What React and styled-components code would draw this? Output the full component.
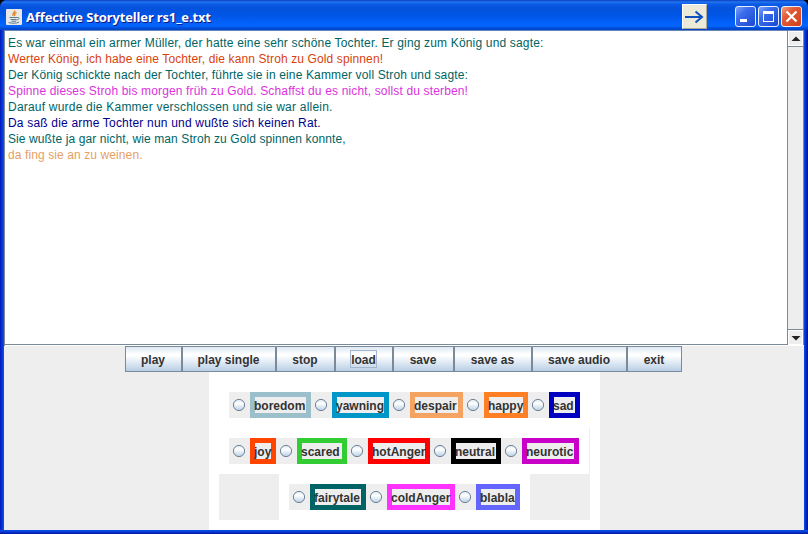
import React from 'react';
import styled, { createGlobalStyle } from 'styled-components';

const Global = createGlobalStyle`
  * { box-sizing: border-box; }
  body { margin: 0; background: #000; overflow: hidden; }
`;

const Window = styled.div`
  width: 808px;
  height: 534px;
  display: flex;
  flex-direction: column;
  font-family: "Liberation Sans", Arial, sans-serif;
  background:
    linear-gradient(#0a50e4 0, #0838d8 2px, #001290 4px) 0 100% / 100% 4px no-repeat,
    linear-gradient(90deg, #0019b8 0, #0831d9 2px, #0a55e8 4px, #0a55e8 804px, #0733d8 805px, #001290 808px);
  border-radius: 7px 7px 0 0;
  overflow: hidden;
`;

const TitleBar = styled.header`
  height: 30px;
  flex: none;
  display: flex;
  align-items: center;
  padding: 3px 6px 0 6px;
  background: linear-gradient(#0a3ec0 0, #2474ee 2px, #0a5ce8 4px, #0552dc 8px, #0055e4 15px, #0260f8 22px, #0364fc 26px, #0150dc 28px, #0040c4 30px);
`;

const Title = styled.h1`
  margin: 0 auto 0 4px;
  font: bold 13px/18px "Noto Sans", sans-serif;
  letter-spacing: ${p => p.$spacing}px;
  color: #fff;
  text-shadow: 1px 1px 0 #0a1883;
  white-space: nowrap;
`;

const ArrowButton = styled.button`
  width: 25px;
  height: 25px;
  margin-right: 26px;
  padding: 0;
  display: flex;
  border: 1px solid;
  border-color: #fff #aca899 #aca899 #fff;
  background: #ece9d8;
`;

const Caption = styled.button`
  width: 21px;
  height: 21px;
  margin-left: 2px;
  padding: 0;
  display: flex;
  border: 1px solid #e8eefc;
  border-radius: 3px;
  background: ${p => p.$close
    ? 'linear-gradient(135deg, #f0a080 0, #e25a38 35%, #d04018 100%)'
    : 'linear-gradient(135deg, #7ca4f8 0, #3a6cec 35%, #1b48d0 100%)'};
`;

const Client = styled.main`
  margin: 0 4px 4px;
  height: 500px;
  display: flex;
  flex-direction: column;
  background: #eee;
`;

const ScrollPane = styled.section`
  height: 316px;
  flex: none;
  display: flex;
  background: #fff;
  border-top: 1px solid #6a86b8;
  border-left: 1px solid #7a8a99;
  box-shadow: inset 0 -1px #fff, inset 0 -2px #7a8a99;
`;

const Story = styled.div`
  flex: 1;
  padding: 4px 0 0 3px;
`;

const Line = styled.p`
  margin: 0;
  height: 16px;
  font-size: 12px;
  line-height: 16px;
  letter-spacing: ${p => p.$spacing}px;
  color: ${p => p.$color};
  white-space: nowrap;
`;

const ScrollBar = styled.div`
  width: 17px;
  height: 314px;
  display: flex;
  flex-direction: column;
  justify-content: space-between;
  background: #eee;
  border-left: 1px solid #7a8a99;
  border-right: 1px solid #7a8a99;
`;

const ScrollArrow = styled.div`
  height: 15px;
  display: flex;
  background: #eee;
  border: 1px solid #fff;
  box-shadow: 0 ${p => (p.$down ? -1 : 1)}px #7a8a99;
`;

const ButtonRow = styled.nav`
  display: flex;
  height: 26px;
  margin-left: 121px;
`;

const Command = styled.button`
  width: ${p => p.$width}px;
  height: 26px;
  padding: 0 1px 0 0;
  border: 1px solid #7a8a99;
  background: linear-gradient(#dde8f3 0, #fff 30%, #fff 36%, #b8cfe5 100%);
  font: bold 12px/16px "Liberation Sans", Arial, sans-serif;
  color: #333;
`;

const Focus = styled.span`
  display: inline-block;
  height: 18px;
  line-height: 18px;
  border: 1px solid ${p => (p.$on ? '#a3b8cc' : 'transparent')};
`;

const Emotions = styled.section`
  width: 391px;
  height: 158px;
  margin-left: 205px;
  padding: 10px;
  background: #fff;
`;

const Row = styled.div`
  height: 46px;
  display: flex;
  justify-content: ${p => (p.$ends ? 'space-between' : 'flex-start')};
  border-right: ${p => (p.$edge ? '1px solid #eee' : '0')};
`;

const Filler = styled.div`
  width: 60px;
  background: #eee;
`;

const Group = styled.div`
  display: flex;
  padding: 10px;
`;

const Option = styled.label`
  display: flex;
  height: 26px;
`;

const RadioCell = styled.span`
  width: 21px;
  display: flex;
  background: #eee;
`;

const Tag = styled.span`
  width: ${p => p.$width}px;
  height: 26px;
  border: 5px solid ${p => p.$color};
  background: #eee;
  font-size: 12px;
  font-weight: bold;
  line-height: 18px;
  text-indent: -1px;
  color: #333;
  white-space: nowrap;
`;

const lines = [
  ['Es war einmal ein armer Müller, der hatte eine sehr schöne Tochter. Er ging zum König und sagte:', '#006464', 0.168],
  ['Werter König, ich habe eine Tochter, die kann Stroh zu Gold spinnen!', '#d8420c', 0.118],
  ['Der König schickte nach der Tochter, führte sie in eine Kammer voll Stroh und sagte:', '#006464', 0.143],
  ['Spinne dieses Stroh bis morgen früh zu Gold. Schaffst du es nicht, sollst du sterben!', '#dc32dc', 0.15],
  ['Darauf wurde die Kammer verschlossen und sie war allein.', '#006464', 0.21],
  ['Da saß die arme Tochter nun und wußte sich keinen Rat.', '#00008c', 0.19],
  ['Sie wußte ja gar nicht, wie man Stroh zu Gold spinnen konnte,', '#006464', 0.1],
  ['da fing sie an zu weinen.', '#e6a05f', 0.1],
];

const commands = [
  ['play', 57], ['play single', 94], ['stop', 59], ['load', 58],
  ['save', 61], ['save as', 78], ['save audio', 95], ['exit', 55],
];

const rows = [
  [['boredom', 61, '#9bbfcb'], ['yawning', 57, '#0096c8'], ['despair', 53, '#f4a460'], ['happy', 44, '#ff7f24'], ['sad', 31, '#0000c0']],
  [['joy', 26, '#ff4500'], ['scared', 50, '#32cd32'], ['hotAnger', 62, '#ff0000'], ['neutral', 50, '#000'], ['neurotic', 57, '#c800c8']],
  [['fairytale', 56, '#006464'], ['coldAnger', 68, '#ff32ff'], ['blabla', 44, '#6464ff']],
];

function Radio() {
  return (
    <svg width="21" height="26" viewBox="0 0 21 26">
      <defs>
        <linearGradient id="radio" x1="0" y1="0" x2="0" y2="1">
          <stop offset="0" stopColor="#dde8f3" />
          <stop offset=".35" stopColor="#fff" />
          <stop offset="1" stopColor="#b8cfe5" />
        </linearGradient>
      </defs>
      <circle cx="10" cy="13" r="5.6" fill="url(#radio)" stroke="#6f8296" />
    </svg>
  );
}

function Options({ items }) {
  return (
    <Group>
      {items.map(([name, width, color]) => (
        <Option key={name}>
          <RadioCell><Radio /></RadioCell>
          <Tag $width={width} $color={color}>{name}</Tag>
        </Option>
      ))}
    </Group>
  );
}

function JavaCup() {
  return (
    <svg width="16" height="16" viewBox="0 0 16 16" fill="none">
      <rect width="16" height="16" rx="1" fill="#e9e8e6" />
      <path d="M8.5 1.500c1.500 2-3 2.700-1.500 5.500M10.500 3.500c-2 1-2.500 1.800-1.500 3.500" stroke="#e08a30" strokeWidth="1.500" />
      <path d="M3.500 8.500h7.500M4.500 10.500h6M5.500 12.200h4.500M11 8.500c3-.5 2.500 2.300-.5 2.500M2.500 13.500c3 1 8 1 10.500-.3" stroke="#5c7c98" />
    </svg>
  );
}

export default function App() {
  return (
    <>
      <Global />
      <Window>
        <TitleBar>
          <JavaCup />
          <Title $spacing={-0.14}>Affective Storyteller rs1_e.txt</Title>
          <ArrowButton>
            <svg width="23" height="23" viewBox="0 0 23 23" fill="none" stroke="#0f50c0" strokeWidth="2">
              <path d="M2 12h17M12.500 6.500l6.500 5.500-6.500 5.500" />
            </svg>
          </ArrowButton>
          <Caption>
            <svg width="19" height="19" viewBox="0 0 19 19"><path d="M4 12h7v3H4z" fill="#fff" /></svg>
          </Caption>
          <Caption>
            <svg width="19" height="19" viewBox="0 0 19 19"><path d="M4 4h11v11H4zM5 7v7h9V7z" fill="#fff" fillRule="evenodd" /></svg>
          </Caption>
          <Caption $close>
            <svg width="19" height="19" viewBox="0 0 19 19" stroke="#fff" strokeWidth="2.200"><path d="M4.500 4.500l10 10M14.500 4.500l-10 10" /></svg>
          </Caption>
        </TitleBar>
        <Client>
          <ScrollPane>
            <Story>
              {lines.map(([text, color, spacing]) => (
                <Line key={text} $color={color} $spacing={spacing}>{text}</Line>
              ))}
            </Story>
            <ScrollBar>
              <ScrollArrow><svg width="13" height="13"><path d="M2.500 9h9L7 4.500z" fill="#222" /></svg></ScrollArrow>
              <ScrollArrow $down><svg width="13" height="13"><path d="M2.500 5h9L7 9.500z" fill="#222" /></svg></ScrollArrow>
            </ScrollBar>
          </ScrollPane>
          <ButtonRow>
            {commands.map(([name, width]) => (
              <Command key={name} $width={width}><Focus $on={name === 'load'}>{name}</Focus></Command>
            ))}
          </ButtonRow>
          <Emotions>
            <Row><Options items={rows[0]} /></Row>
            <Row $edge><Options items={rows[1]} /></Row>
            <Row $ends>
              <Filler />
              <Options items={rows[2]} />
              <Filler />
            </Row>
          </Emotions>
        </Client>
      </Window>
    </>
  );
}
